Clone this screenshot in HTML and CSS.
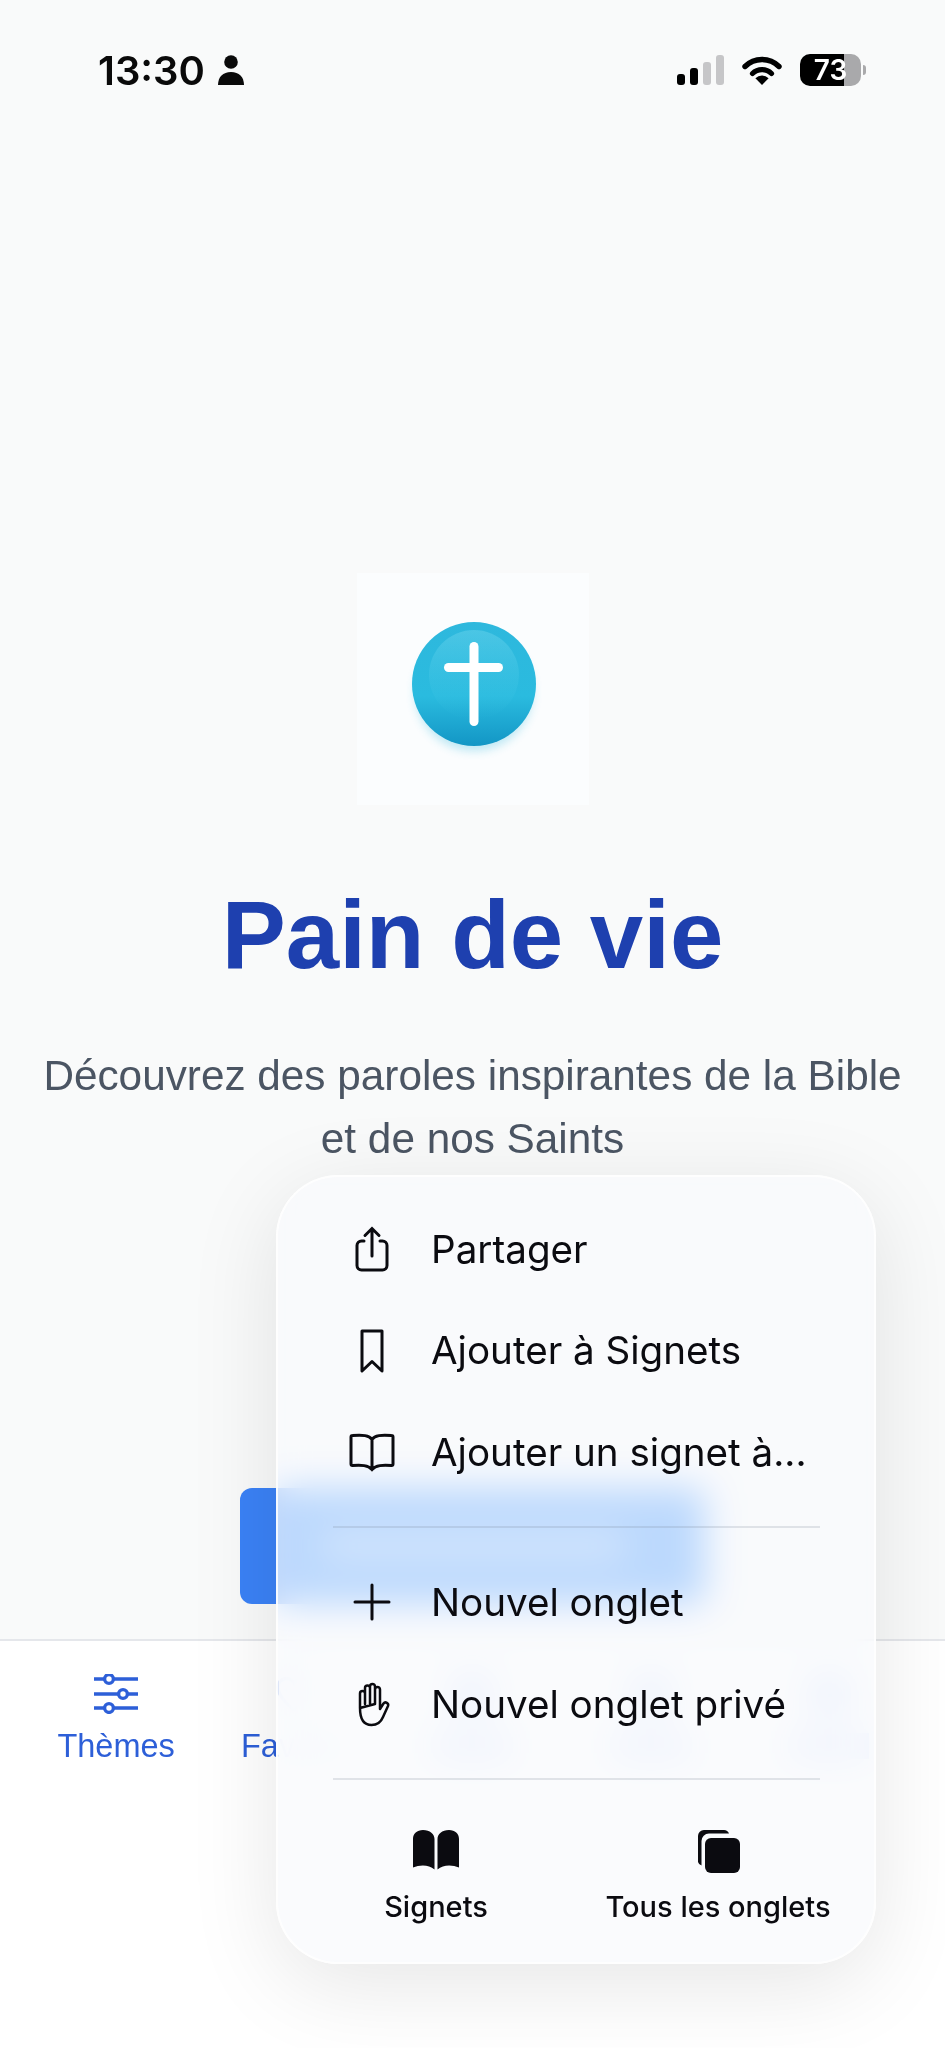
FILE: index.html
```html
<!DOCTYPE html>
<html lang="fr">
<head>
    <meta charset="UTF-8">
    <meta name="viewport" content="width=device-width, initial-scale=1.0">
    <title>Pain de vie</title>
    <link rel="stylesheet" href="styles.css">
</head>
<body>
    <header class="status-bar">
        <div class="status-left">
            <span class="time">13:30</span>
            <svg class="person" viewBox="0 0 26 30"><circle cx="13" cy="7" r="6.8"/><path d="M0 30c0-8 5-13 13-13s13 5 13 13z"/></svg>
        </div>
        <div class="status-right">
            <div class="signal">
                <span class="bar bar-1"></span>
                <span class="bar bar-2"></span>
                <span class="bar bar-3 off"></span>
                <span class="bar bar-4 off"></span>
            </div>
            <svg class="wifi" viewBox="0 0 40 30"><path d="M3 11.5a24 24 0 0 1 34 0" fill="none" stroke="#000" stroke-width="5.4" stroke-linecap="round"/><path d="M10.5 18.5a13.5 13.5 0 0 1 19 0" fill="none" stroke="#000" stroke-width="5.2" stroke-linecap="round"/><path d="M20 30l-6.6-6.7a9.4 9.4 0 0 1 13.2 0z"/></svg>
            <div class="battery">
                <div class="battery-body"><span class="battery-level">73</span></div>
                <span class="battery-nub"></span>
            </div>
        </div>
    </header>

    <main class="hero">
        <div class="logo">
            <svg viewBox="0 0 228 228" width="228" height="228">
                <defs>
                    <linearGradient id="ball" x1="0" y1="0" x2="0" y2="1">
                        <stop offset="0" stop-color="#2eb8dd"/>
                        <stop offset="0.6" stop-color="#2abbdf"/>
                        <stop offset="1" stop-color="#1396c5"/>
                    </linearGradient>
                    <linearGradient id="gloss" x1="0" y1="0" x2="0" y2="1">
                        <stop offset="0" stop-color="#6fd6ee" stop-opacity="0.45"/>
                        <stop offset="1" stop-color="#45cae8" stop-opacity="0"/>
                    </linearGradient>
                    <filter id="soft" x="-30%" y="-30%" width="160%" height="160%"><feGaussianBlur stdDeviation="5"/></filter>
                </defs>
                <ellipse cx="115" cy="117" rx="59" ry="59" fill="#2fb6dc" opacity="0.3" filter="url(#soft)"/>
                <circle cx="115" cy="109" r="62" fill="url(#ball)"/>
                <circle cx="115" cy="100" r="45" fill="url(#gloss)"/>
                <rect x="110.500" y="67" width="9" height="84" rx="4.500" fill="#fff"/>
                <rect x="85" y="88" width="59" height="9" rx="4.500" fill="#fff"/>
            </svg>
        </div>
        <h1 class="title">Pain de vie</h1>
        <p class="subtitle">Découvrez des paroles inspirantes de la Bible<br>et de nos Saints</p>
        <div class="start-btn"><span class="start-label"></span></div>
    </main>

    <nav class="tabbar">
        <div class="tab">
            <svg class="tab-icon" viewBox="0 0 44 40" fill="none" stroke="#2d5fd8" stroke-width="3.4">
                <path d="M0 5h44M0 20h44M0 34h44" stroke-linecap="round"/>
                <circle cx="15" cy="5" r="4.400" fill="#fff"/>
                <circle cx="29" cy="20" r="4.400" fill="#fff"/>
                <circle cx="15" cy="34" r="4.400" fill="#fff"/>
            </svg>
            <span class="tab-label">Thèmes</span>
        </div>
        <div class="tab">
            <!-- only the left edge of this icon sticks out from under the menu -->
            <svg class="tab-icon" viewBox="0 0 44 40" fill="none" stroke-width="3.4">
                <defs>
                    <linearGradient id="heartFade" gradientUnits="userSpaceOnUse" x1="0" y1="0" x2="44" y2="0">
                        <stop offset="0.15" stop-color="#2d5fd8"/>
                        <stop offset="0.15" stop-color="#2d5fd8" stop-opacity="0.12"/>
                    </linearGradient>
                </defs>
                <path stroke="url(#heartFade)" d="M22 36C11 27 6 20 6 13a8.500 8.500 0 0 1 16-4 8.500 8.500 0 0 1 16 4c0 7-5 14-16 23z"/>
            </svg>
            <span class="tab-label">Fa<span class="under-menu">voris</span></span>
        </div>
        <div class="tab">
            <span class="tab-smudge"></span>
            <span class="tab-smudge-label"></span>
        </div>
        <div class="tab">
            <span class="tab-smudge"></span>
            <span class="tab-smudge-label"></span>
        </div>
        <div class="tab">
            <span class="tab-smudge"></span>
            <span class="tab-smudge-label"></span>
        </div>
    </nav>

    <div class="safari-menu">
        <div class="menu-group">
            <div class="menu-row">
                <svg class="menu-icon" viewBox="0 0 46 46"><path d="M15 15h-2.500A4.500 4.500 0 0 0 8 19.500v20a4.500 4.500 0 0 0 4.500 4.500h21a4.500 4.500 0 0 0 4.500-4.500v-20a4.500 4.500 0 0 0-4.500-4.500H31M23 30V3M16 9.500 23 2.500l7 7"/></svg>
                <span>Partager</span>
            </div>
            <div class="menu-row">
                <svg class="menu-icon" viewBox="0 0 46 46"><path d="M13 24.500V4a1.500 1.500 0 0 1 0 0h20v40l-10-9.500L13 44z" stroke-linejoin="round"/></svg>
                <span>Ajouter à Signets</span>
            </div>
            <div class="menu-row">
                <svg class="menu-icon" viewBox="0 0 46 46"><path d="M23 10.500C20 6 14 6 3.500 6.500c-1 0-1.500.5-1.500 1.500v27c0 1 .5 1.500 1.500 1.500 9-.5 15.500-.5 19.500 4 4-4.500 10.500-4.500 19.500-4 1 0 1.500-.5 1.500-1.500V8c0-1-.5-1.500-1.500-1.500C32 6 26 6 23 10.500zM23 10.500V39"/></svg>
                <span>Ajouter un signet à...</span>
            </div>
        </div>
        <div class="menu-divider"></div>
        <div class="menu-group">
            <div class="menu-row">
                <svg class="menu-icon" viewBox="0 0 46 46"><path d="M23 6v34M6 23h34"/></svg>
                <span>Nouvel onglet</span>
            </div>
            <div class="menu-row">
                <svg class="menu-icon hand" viewBox="0 0 46 46"><path d="M11 27V12.500a2.500 2.500 0 0 1 5 0V23M16 23V7a2.500 2.500 0 0 1 5 0v16M21 23V5.500a2.500 2.500 0 0 1 5 0V23M26 23V8.500a2.500 2.500 0 0 1 5 0V28l3.500-5.500a2.600 2.600 0 0 1 4.500 2.500L34 36c-2 5-5.500 8-11.500 8C15 44 11 38 11 27z" stroke-linejoin="round"/></svg>
                <span>Nouvel onglet privé</span>
            </div>
        </div>
        <div class="menu-divider divider-low"></div>
        <div class="menu-bottom">
            <div class="menu-action action-signets">
                <svg class="action-icon" viewBox="0 0 48 44"><path d="M22.500 40.500C17 35.500 8 35.500 1 38.500V10C1 4.500 5 1 11 1c7 0 11.500 4 11.500 9zM25.500 40.500C31 35.500 40 35.500 47 38.500V10C47 4.500 43 1 37 1c-7 0-11.500 4-11.500 9z"/></svg>
                <span>Signets</span>
            </div>
            <div class="menu-action action-tabs">
                <svg class="action-icon" viewBox="0 0 48 44"><path d="M4 33V7a6 6 0 0 1 6-6h20a5.500 5.500 0 0 1 5 3.500H15a7.500 7.500 0 0 0-7.500 7.500v24.500A5 5 0 0 1 4 33z"/><rect x="11" y="9" width="35" height="35" rx="6"/></svg>
                <span>Tous les onglets</span>
            </div>
        </div>
    </div>
</body>
</html>
```

FILE: styles.css
```css
* {
    box-sizing: border-box;
}
html, body {
    margin: 0;
    height: 100%;
}
body {
    position: relative;
    display: flex;
    flex-direction: column;
    width: 945px;
    height: 2048px;
    overflow: hidden;
    background-color: #f9fafa;
    font-family: 'Liberation Sans', Arial, sans-serif;
}

/* status bar */
.status-bar {
    display: flex;
    justify-content: space-between;
    align-items: center;
    height: 140px;
    padding: 0 79px 0 98px;
}
.status-left {
    display: flex;
    align-items: center;
    gap: 12px;
}
.time {
    font-family: Inter, sans-serif;
    font-size: 40px;
    font-weight: 600;
    color: #0a0a0a;
}
.person {
    width: 28px;
    height: 30px;
    fill: #0a0a0a;
}
.status-right {
    display: flex;
    align-items: center;
    gap: 18px;
}
.signal {
    display: flex;
    align-items: flex-end;
    gap: 5px;
    height: 30px;
}
.bar {
    width: 8px;
    border-radius: 3px;
    background-color: #000;
}
.bar.off {
    background-color: #c6c6c8;
}
.bar-1 { height: 11px; }
.bar-2 { height: 17px; }
.bar-3 { height: 23px; }
.bar-4 { height: 30px; }
.wifi {
    width: 40px;
    height: 30px;
}
.battery {
    display: flex;
    align-items: center;
    gap: 2px;
}
.battery-body {
    display: flex;
    align-items: center;
    justify-content: center;
    width: 61px;
    height: 32px;
    border-radius: 10px;
    background: linear-gradient(to right, #000 0, #000 72%, #a9a9ab 72%, #a9a9ab 100%);
}
.battery-level {
    font-family: Inter, sans-serif;
    font-size: 28px;
    font-weight: 600;
    color: #fff;
}
.battery-nub {
    width: 3px;
    height: 10px;
    border-radius: 0 3px 3px 0;
    background-color: #a9a9ab;
}

/* main content */
.hero {
    flex: 1;
    display: flex;
    flex-direction: column;
    align-items: center;
    padding-top: 433px;
}
.logo {
    display: flex;
    align-items: center;
    justify-content: center;
    width: 232px;
    height: 232px;
    background-color: #fbfdfe;
}
.title {
    margin: 80px 0 59px;
    font-size: 96px;
    line-height: 100px;
    font-weight: 700;
    color: #1e40af;
}
.subtitle {
    margin: 0;
    font-size: 42.3px;
    line-height: 63px;
    text-align: center;
    color: #4b5563;
}
.start-btn {
    display: flex;
    align-items: center;
    justify-content: center;
    width: 465px;
    height: 116px;
    margin-top: 318px;
    border-radius: 12px;
    background-color: #3b82f6;
}
.start-label {
    width: 300px;
    height: 26px;
    background-color: rgba(255, 255, 255, 0.4);
}

/* bottom tabs */
.tabbar {
    display: grid;
    grid-template-columns: repeat(5, 1fr);
    height: 409px;
    padding: 33px 27px 0;
    background-color: #fff;
    border-top: 2px solid #e5e7eb;
}
.tab {
    display: flex;
    flex-direction: column;
    align-items: center;
    gap: 14px;
}
.tab-icon {
    width: 44px;
    height: 40px;
}
.tab-label {
    font-size: 32.5px;
    line-height: 37px;
    color: #2d5fd8;
}
.under-menu {
    opacity: 0.12;
}
.tab-smudge {
    width: 44px;
    height: 40px;
    border-radius: 50%;
    background-color: #2d5fd8;
    opacity: 0.2;
}
.tab-smudge-label {
    width: 80px;
    height: 26px;
    margin-top: 5px;
    background-color: #2d5fd8;
    opacity: 0.16;
}

/* safari menu, floats over the page */
.safari-menu {
    position: absolute;
    left: 276px;
    top: 1175px;
    width: 600px;
    height: 789px;
    padding-top: 21px;
    border: 2px solid rgba(255, 255, 255, 0.85);
    border-radius: 62px;
    background-color: rgba(248, 249, 252, 0.72);
    -webkit-backdrop-filter: blur(18px) saturate(1.4);
    backdrop-filter: blur(18px) saturate(1.4);
    box-shadow: 0 20px 90px rgba(0, 0, 0, 0.1);
    font-family: Inter, sans-serif;
    color: #0b0b10;
}
.menu-row {
    display: flex;
    align-items: center;
    gap: 36px;
    height: 101.500px;
    padding-left: 71px;
    font-size: 38.6px;
}
.menu-icon {
    flex: none;
    width: 46px;
    height: 46px;
    fill: none;
    stroke: #0b0b10;
    stroke-width: 3;
    stroke-linecap: round;
}
.menu-icon.hand {
    stroke-width: 2.5;
}
.menu-divider {
    height: 2px;
    margin: 23px 54px 24px 55px;
    background-color: rgba(120, 130, 150, 0.2);
}
.divider-low {
    margin-bottom: 0;
}
.menu-bottom {
    display: flex;
    padding-top: 49px;
}
.menu-action {
    position: absolute;
    display: flex;
    flex-direction: column;
    align-items: center;
    gap: 16px;
    font-size: 29px;
    font-weight: 500;
}
.action-signets {
    left: 108px;
    width: 100px;
}
.action-tabs {
    left: 310px;
    width: 260px;
}
.action-icon {
    width: 48px;
    height: 44px;
    fill: #0b0b10;
}
```
